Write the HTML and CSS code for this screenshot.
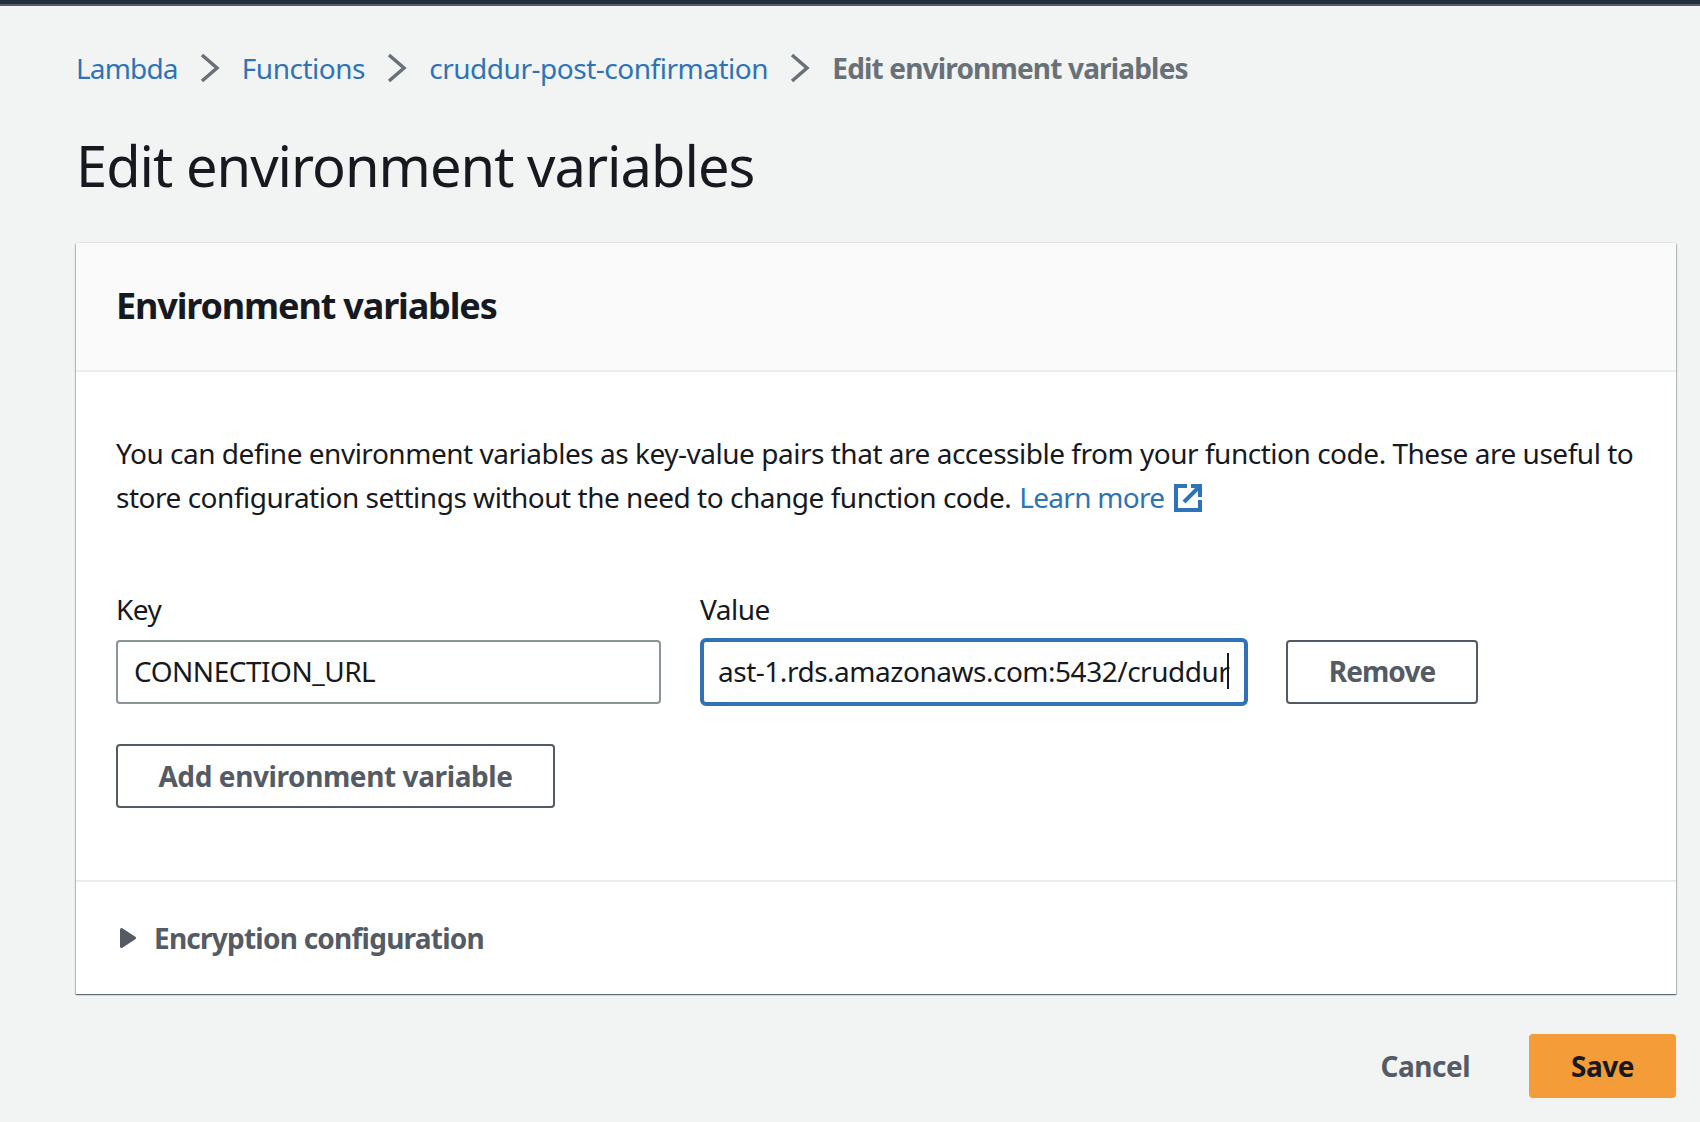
FILE: index.html
```html
<!DOCTYPE html>
<html lang="en">
<head>
<meta charset="utf-8">
<title>Edit environment variables</title>
<link rel="stylesheet" href="styles.css">
</head>
<body>
<div class="topbar"></div>
<div class="page">
  <nav class="crumbs">
    <a class="crumb-link crumb-first">Lambda</a>
    <svg class="chevron" viewBox="0 0 20 30"><path d="M2 2l15 13L2 28"/></svg>
    <a class="crumb-link">Functions</a>
    <svg class="chevron" viewBox="0 0 20 30"><path d="M2 2l15 13L2 28"/></svg>
    <a class="crumb-link">cruddur-post-confirmation</a>
    <svg class="chevron" viewBox="0 0 20 30"><path d="M2 2l15 13L2 28"/></svg>
    <span class="crumb-current">Edit environment variables</span>
  </nav>
  <h1 class="title">Edit environment variables</h1>

  <section class="card">
    <header class="card-head">
      <h2 class="card-title">Environment variables</h2>
    </header>
    <div class="card-body">
      <p class="intro">You can define environment variables as key-value pairs that are accessible from your function code. These are useful to store configuration settings without the need to change function code. <a class="link">Learn more</a> <svg class="ext-icon" viewBox="0 0 28 28"><path d="M13 2H2v24h24V16M10 18L25 3M17 2h9v11"/></svg></p>
      <div class="row">
        <div class="field">
          <div class="field-label">Key</div>
          <div class="input">CONNECTION_URL</div>
        </div>
        <div class="field field-value">
          <div class="field-label">Value</div>
          <div class="input input-focus"><span>ast-1.rds.amazonaws.com:5432/cruddur</span><i class="caret"></i></div>
        </div>
        <button class="btn btn-remove">Remove</button>
      </div>
      <button class="btn btn-add">Add environment variable</button>
    </div>
    <div class="card-foot">
      <svg class="caret-right" viewBox="0 0 16 20"><path d="M1.500 1.500L14.500 10L1.500 18.500z"/></svg>
      <span class="foot-label">Encryption configuration</span>
    </div>
  </section>

  <div class="actions">
    <button class="btn-plain">Cancel</button>
    <button class="btn-save">Save</button>
  </div>
</div>
</body>
</html>
```
FILE: styles.css
```css
* { box-sizing: border-box; }
html, body { margin: 0; height: 100%; }
body {
  background: #f2f3f3;
  color: #16191f;
  font-family: "Noto Sans", "Liberation Sans", sans-serif;
  font-size: 28px;
  line-height: 44px;
  letter-spacing: -.48px;
  overflow: hidden;
}
.topbar {
  height: 6px;
  background: #232f3e;
  border-bottom: 2px solid #545b64;
}
.page { padding: 0 24px 0 76px; }

.crumbs {
  display: flex;
  align-items: center;
  height: 44px;
  margin-top: 40px;
}
.crumb-link { color: #2e73b8; }
.crumb-first { letter-spacing: -.85px; }
.crumb-current { color: #687078; font-weight: 700; letter-spacing: -.83px; }
.chevron {
  width: 20px;
  height: 30px;
  margin: 0 22.200px 0 22px;
  fill: none;
  stroke: #687078;
  stroke-width: 3.500;
}

.title {
  margin: 39px 0 0;
  font-size: 56px;
  line-height: 72px;
  font-weight: 400;
  letter-spacing: -.98px;
}

.card {
  margin-top: 42px;
  height: 751px;
  background: #fff;
  box-shadow: 0 1px 1px 0 rgba(0, 28, 36, .4), 1px 1px 1px 0 rgba(0, 28, 36, .2), -1px 1px 1px 0 rgba(0, 28, 36, .2), 0 -1px 1px 0 rgba(0, 28, 36, .06);
  display: flex;
  flex-direction: column;
}
.card-head {
  height: 129px;
  padding: 0 40px 2px;
  display: flex;
  align-items: center;
  background: #fafafa;
  border-bottom: 2px solid #eaeded;
}
.card-title { margin: 0; font-size: 36px; line-height: 44px; font-weight: 700; letter-spacing: -1.150px; }

.card-body {
  height: 510px;
  padding: 59px 40px 0;
  border-bottom: 2px solid #eaeded;
}
.intro { margin: 0; }
.link { color: #2e73b8; letter-spacing: -.7px; margin-left: 1px; }
.ext-icon {
  width: 28px;
  height: 28px;
  vertical-align: -4px;
  margin-left: 3px;
  fill: none;
  stroke: #2e73b8;
  stroke-width: 4;
}

.row { display: flex; align-items: flex-end; margin-top: 68px; }
.field { width: 545px; }
.field-value { width: 548px; margin-left: 39px; }
.field-label { margin-bottom: 9px; }
.input {
  height: 64px;
  padding: 0 16px 2px;
  display: flex;
  align-items: center;
  background: #fff;
  border: 2px solid #879596;
  border-radius: 4px;
  white-space: nowrap;
}
.input-focus {
  height: 68px;
  margin-top: -2px;
  margin-bottom: -2px;
  border: 4px solid #2e73b8;
  border-radius: 6px;
  padding: 0 14px 2px;
  overflow: hidden;
}
.caret {
  width: 2px;
  height: 36px;
  background: #16191f;
  flex: none;
  margin-left: -2px;
}
.btn {
  height: 64px;
  padding: 0;
  background: #fff;
  border: 2px solid #545b64;
  border-radius: 4px;
  color: #545b64;
  font: inherit;
  font-weight: 700;
}
.btn-remove { width: 192px; margin-left: 38px; padding-bottom: 2px; letter-spacing: -.9px; }
.btn-add { width: 439px; display: block; margin-top: 40px; letter-spacing: -.4px; }

.card-foot {
  flex: 1;
  display: flex;
  align-items: center;
  padding: 0 44px;
  color: #545b64;
  font-weight: 700;
  letter-spacing: -.76px;
}
.caret-right { width: 16px; height: 20px; fill: #545b64; stroke: #545b64; stroke-width: 3; stroke-linejoin: round; }
.foot-label { margin-left: 18px; }

.actions {
  display: flex;
  justify-content: flex-end;
  align-items: center;
  margin-top: 40px;
}
.btn-plain, .btn-save {
  border: 0;
  padding: 0;
  font: inherit;
  font-weight: 700;
  letter-spacing: -.5px;
}
.btn-plain { background: none; color: #545b64; margin-right: 59px; }
.btn-save {
  width: 147px;
  height: 64px;
  background: #f49c37;
  color: #16191f;
  border-radius: 4px;
}
```
